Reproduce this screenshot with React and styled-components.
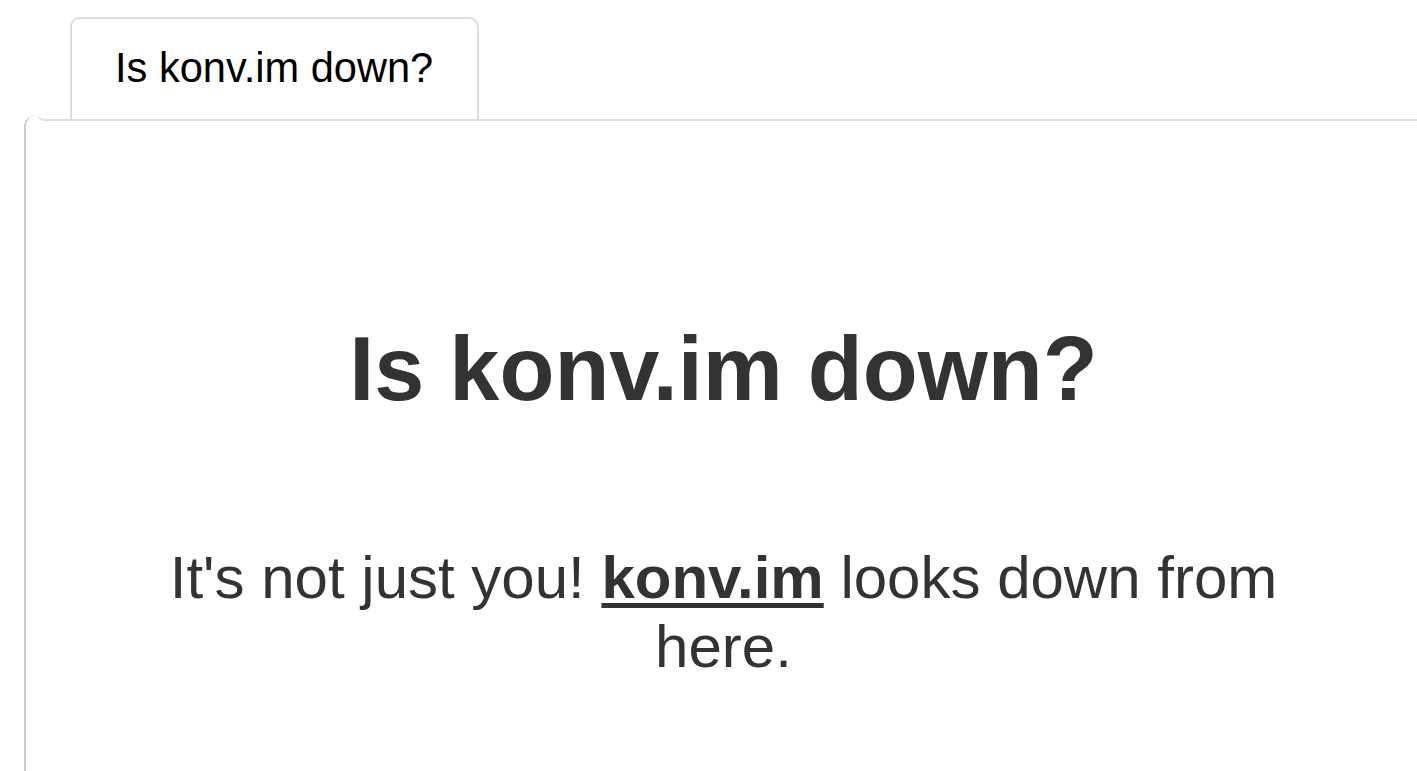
import React from "react";
import styled, { createGlobalStyle } from "styled-components";

const Global = createGlobalStyle`
  html, body {
    margin: 0;
    padding: 0;
    background: #fff;
    overflow: hidden;
    font-family: "Liberation Sans", Arial, Helvetica, sans-serif;
  }
`;

const Page = styled.div`
  padding: 17px 0 0 24px;
  min-height: 754px;
  display: flex;
  flex-direction: column;
`;

const TabBar = styled.nav`
  display: flex;
  margin-left: 13px;
  margin-right: -4px;
  padding-left: 33px;
  border-bottom: 2.5px solid #ddd;
  border-bottom-left-radius: 8px;
`;

const Tab = styled.div`
  font-size: 41.6px;
  line-height: 47px;
  color: #000;
  padding: 25px 44px 28px 43px;
  border: 2.5px solid #ddd;
  border-bottom: none;
  border-radius: 10px 10px 0 0;
  background: #fff;
`;

const Panel = styled.main`
  flex: 1;
  margin-top: -6px;
  margin-right: -4px;
  border-left: 2.5px solid #ccc;
  border-top-left-radius: 12px;
  padding: 205px 80px 0;
  text-align: center;
  color: #333;
`;

const Heading = styled.h1`
  margin: 0;
  font-size: 90px;
  line-height: 99px;
  font-weight: 700;
  color: #333;
`;

const Message = styled.p`
  margin: 125px 0 0;
  font-size: 60px;
  line-height: 68.5px;
  color: #333;
`;

const Domain = styled.a`
  font-weight: 700;
  color: #333;
  text-decoration: underline;
  text-decoration-thickness: 5px;
  text-underline-offset: 5px;
`;

export default function App() {
  return (
    <>
      <Global />
      <Page>
        <TabBar>
          <Tab>Is konv.im down?</Tab>
        </TabBar>
        <Panel>
          <Heading>Is konv.im down?</Heading>
          <Message>
            It's not just you! <Domain href="#">konv.im</Domain> looks down from here.
          </Message>
        </Panel>
      </Page>
    </>
  );
}
